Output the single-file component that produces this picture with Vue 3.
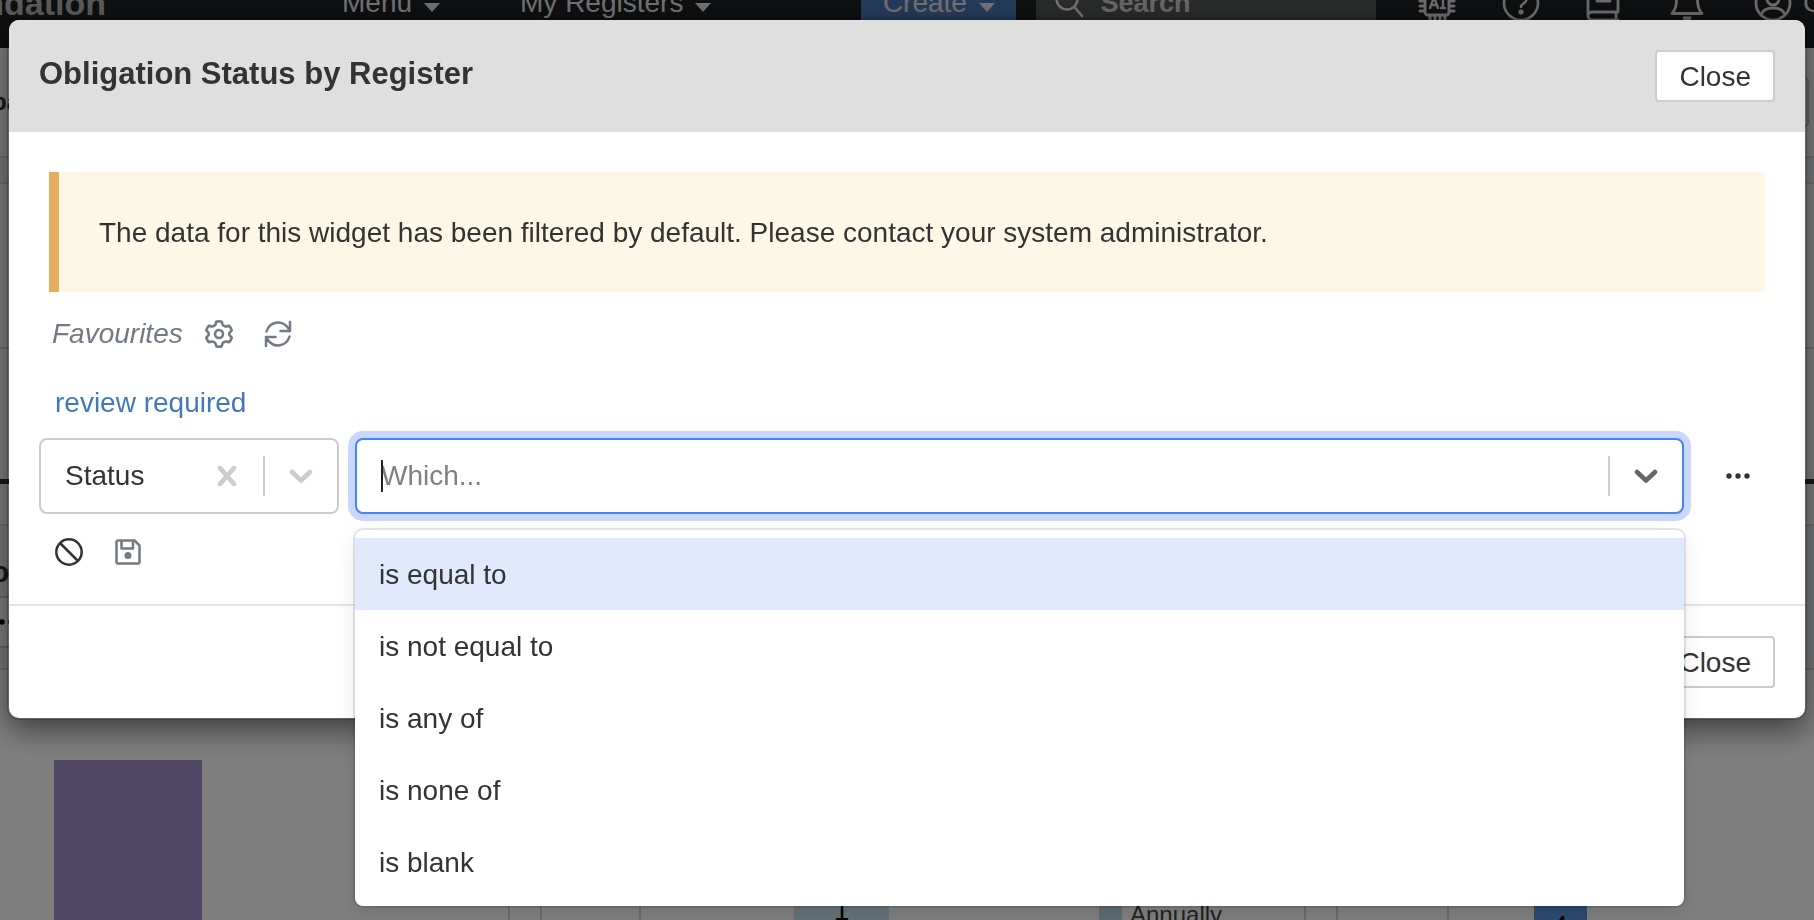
<script setup>
import { ref } from 'vue'

const field = ref('Status')
const query = ref('')
const active = ref(0)
const operators = ['is equal to', 'is not equal to', 'is any of', 'is none of', 'is blank']
</script>

<template>
  <div class="app">
    <div class="page">
      <header class="topbar">
        <div class="brand"><span>Foundation</span></div>
        <nav class="nav" aria-label="Main">
          <button class="nav-item" type="button">Menu <i class="tri"></i></button>
          <button class="nav-item" type="button">My Registers <i class="tri"></i></button>
        </nav>
        <button class="create" type="button">Create <i class="tri"></i></button>
        <div class="search">
          <svg width="32" height="32" viewBox="0 0 32 32" fill="none" stroke="currentColor" stroke-width="2.6" stroke-linecap="round"><circle cx="13" cy="12" r="10.5" /><path d="M20.5 20 28 29" /></svg>
          <input type="text" placeholder="Search" aria-label="Search" />
        </div>
        <div class="tools">
          <button type="button" aria-label="AI assistant">
            <svg width="38" height="38" viewBox="0 0 38 38" fill="none" stroke="currentColor" stroke-width="3" stroke-linecap="round"><rect x="7" y="7" width="24" height="24" rx="3" /><path d="M12 2v4M17 2v4M22 2v4M27 2v4M12 32v4M17 32v4M22 32v4M27 32v4M2 12h4M2 17h4M2 22h4M2 27h4M32 12h4M32 17h4M32 22h4M32 27h4" /><path d="m12 24 4-11 4 11M13.500 21h5M25 13v11M23 13h4M23 24h4" stroke-width="2.400" /></svg>
          </button>
          <button type="button" aria-label="Help">
            <svg width="38" height="38" viewBox="0 0 38 38" fill="none" stroke="currentColor" stroke-width="2.600" stroke-linecap="round"><circle cx="19" cy="19" r="17" /><path d="M13.500 14.500a5.500 5.500 0 1 1 8 5c-2 1.200-2.500 2-2.500 3.500" /><circle cx="19" cy="28" r="1.300" fill="currentColor" /></svg>
          </button>
          <button type="button" aria-label="Library">
            <svg width="38" height="38" viewBox="0 0 38 38" fill="none" stroke="currentColor" stroke-width="2.800" stroke-linecap="round" stroke-linejoin="round"><path d="M32 36H6a4 4 0 0 1-4-4V6a4 4 0 0 1 4-4h24a2 2 0 0 1 2 2v24H6a4 4 0 0 0-4 4M30 28v8M11 10h13M11 17h13" /></svg>
          </button>
          <button type="button" aria-label="Notifications">
            <svg width="38" height="38" viewBox="0 0 38 38" fill="none" stroke="currentColor" stroke-width="2.800" stroke-linecap="round" stroke-linejoin="round"><path d="M17 2v3M2 29.500c3-3 4.500-8 4.500-14a10.500 10.500 0 0 1 21 0c0 6 1.500 11 4.500 14Z" /><path d="M14 34h6l-3 3Z" fill="currentColor" /></svg>
          </button>
          <button type="button" aria-label="Account">
            <svg width="38" height="38" viewBox="0 0 38 38" fill="none" stroke="currentColor" stroke-width="2.800"><circle cx="19" cy="19" r="17" /><circle cx="19" cy="15" r="6" /><path d="M7.500 30c3-8 20-8 23 0" /></svg>
          </button>
          <span class="user">Chris</span>
        </div>
      </header>

      <main class="board">
        <div class="row title-row"><b>ba</b><i class="corner"></i></div>
        <div class="row tint-row"></div>
        <div class="row upper-row"></div>
        <div class="row lower-row"></div>
        <div class="row gap-row"></div>
        <div class="panel-row">
          <div class="panel-left">
            <div class="panel-head"><b>o</b></div>
            <div class="panel-menu">
              <svg width="16" height="6" viewBox="0 0 16 6"><circle cx="2" cy="3" r="2.700" /><circle cx="11" cy="3" r="2.700" /></svg>
            </div>
            <div class="panel-sub"></div>
          </div>
          <div class="panel-right"></div>
        </div>
        <div class="charts">
          <section class="card one"><div class="bar purple"></div></section>
          <section class="card two">
            <div class="axis"></div>
            <div class="bar pale">1</div>
            <div class="legend"><i></i><span>Annually</span></div>
          </section>
          <section class="card three"><div class="axis"></div><div class="bar blue">4</div></section>
        </div>
      </main>
    </div>

    <div class="backdrop">
      <div class="modal" role="dialog" aria-modal="true" aria-labelledby="dialog-title">
        <header class="modal-head">
          <h1 id="dialog-title">Obligation Status by Register</h1>
          <button class="btn" type="button">Close</button>
        </header>
        <div class="modal-body">
          <p class="alert">The data for this widget has been filtered by default. Please contact your system administrator.</p>
          <div class="favourites">
            <em>Favourites</em>
            <button type="button" aria-label="Favourite settings">
              <svg width="28" height="28" viewBox="0 0 28 28" fill="none" stroke="currentColor" stroke-width="2.600" stroke-linejoin="round"><circle cx="14" cy="14" r="4" /><path d="M11.300 1.800Q14 .8 16.700 1.800L17.600 4.700Q18 5.400 18.800 5.700L20 6.300Q20.700 6.600 21.500 6.400L24.200 5.900Q26 7.700 26.700 10.400L24.700 12.600Q24.200 13.200 24.200 14T24.700 15.400L26.700 17.600Q26 20.300 24.200 22.100L21.500 21.600Q20.700 21.400 20 21.700L18.800 22.300Q18 22.600 17.600 23.300L16.700 26.200Q14 27.200 11.300 26.200L10.400 23.300Q10 22.600 9.200 22.300L8 21.700Q7.300 21.400 6.500 21.600L3.800 22.100Q2 20.300 1.300 17.600L3.300 15.400Q3.800 14.800 3.800 14T3.300 12.600L1.300 10.400Q2 7.700 3.800 5.900L6.500 6.400Q7.300 6.600 8 6.300L9.200 5.700Q10 5.400 10.400 4.700Z" /></svg>
            </button>
            <button type="button" aria-label="Refresh favourites">
              <svg width="28" height="28" viewBox="0 0 28 28" fill="none" stroke="currentColor" stroke-width="2.500" stroke-linecap="round" stroke-linejoin="round"><path d="M2.500 11.500C5.500 1.500 18-1 24.500 8.500L26 11M26 2v9h-9.500M25.500 16.500C22.500 26.500 10 29 3.500 19.500L2 17M2 26v-9h9.500" /></svg>
            </button>
          </div>
          <a class="saved" href="#review-required">review required</a>
          <div class="filter">
            <div class="select">
              <select v-model="field" aria-label="Field"><option>Status</option></select>
              <button type="button" aria-label="Clear field">
                <svg width="20" height="20" viewBox="0 0 20 20" stroke="currentColor" stroke-width="4.600" stroke-linecap="round"><path d="m3 2 14 16M17 2 3 18" /></svg>
              </button>
              <i class="divider"></i>
              <span class="chevron"><svg width="24" height="16" viewBox="0 0 24 16" fill="none" stroke="currentColor" stroke-width="4.600" stroke-linecap="round" stroke-linejoin="round"><path d="m3 4 9 8.500 9-8.500" /></svg></span>
            </div>
            <div class="select focused">
              <span class="entry">
                <i class="caret"></i>
                <input v-model="query" type="text" placeholder="Which..." role="combobox" aria-label="Which condition" aria-expanded="true" aria-controls="operators" />
              </span>
              <i class="divider"></i>
              <button class="chevron" type="button" aria-label="Toggle options"><svg width="24" height="16" viewBox="0 0 24 16" fill="none" stroke="currentColor" stroke-width="4.600" stroke-linecap="round" stroke-linejoin="round"><path d="m3 4 9 8.500 9-8.500" /></svg></button>
              <ul id="operators" class="menu" role="listbox" aria-label="Conditions">
                <li v-for="(op, i) in operators" :key="op" role="option" :aria-selected="i === active" :class="{ on: i === active }" @mouseenter="active = i">{{ op }}</li>
              </ul>
            </div>
            <button class="more" type="button" aria-label="More">
              <svg width="24" height="6" viewBox="0 0 24 6" fill="currentColor"><circle cx="3" cy="3" r="2.700" /><circle cx="12" cy="3" r="2.700" /><circle cx="21" cy="3" r="2.700" /></svg>
            </button>
          </div>
          <div class="actions">
            <button type="button" aria-label="Clear filters">
              <svg width="28" height="28" viewBox="0 0 28 28" fill="none" stroke="currentColor" stroke-width="2.500"><circle cx="14" cy="14" r="12.700" /><path d="m5 5 18 18" /></svg>
            </button>
            <button class="save" type="button" aria-label="Save filter">
              <svg width="26" height="26" viewBox="0 0 26 26" fill="none" stroke="currentColor" stroke-width="2.500" stroke-linejoin="round"><path d="M3 1.500h16.500l5 5V23a1.500 1.500 0 0 1-1.500 1.500H3A1.500 1.500 0 0 1 1.500 23V3A1.500 1.500 0 0 1 3 1.500Z" /><path d="M6.500 1.500V9.500h11.500V1.500" /><circle cx="13" cy="16.500" r="3.500" fill="currentColor" stroke="none" /></svg>
            </button>
          </div>
        </div>
        <footer class="modal-foot"><button class="btn" type="button">Close</button></footer>
      </div>
    </div>
  </div>
</template>

<style>
html, body { margin: 0; overflow: hidden; }
</style>

<style scoped>
.app, .app * { box-sizing: border-box; }
.app {
  position: relative;
  height: 100vh;
  overflow: hidden;
  background: #fff;
  color: #333;
  font-family: "Liberation Sans", Arial, sans-serif;
  font-size: 28px;
  line-height: 40px;
}
button, input, select { font: inherit; color: inherit; border: 0; background: none; padding: 0; margin: 0; outline: 0; }
button { display: inline-flex; align-items: center; justify-content: center; }
svg { display: block; flex: none; }
i { font-style: normal; }

.page { display: flex; flex-direction: column; height: 100%; }
.topbar {
  display: flex;
  align-items: center;
  flex: none;
  height: 96px;
  margin-top: -48px;
  padding-top: 6px;
  background: #1b1f22;
  color: #e4e4e4;
  white-space: nowrap;
}
.brand { display: flex; flex: none; justify-content: flex-end; width: 106px; overflow: hidden; color: #b8b8b8; font-size: 34px; font-weight: 700; }
.nav { display: flex; flex: none; gap: 80px; margin-left: 236px; }
.nav-item, .create { flex: none; gap: 12px; }
.tri { border: 8px solid transparent; border-top: 9px solid currentColor; border-bottom: 0; margin-top: 8px; }
.create { width: 155px; height: 60px; margin-left: 150px; background: #4878b4; }
.search { display: flex; align-items: center; gap: 14px; flex: 1; min-width: 0; height: 60px; margin-left: 20px; padding-left: 18px; background: #535555; }
.search input { flex: 1; min-width: 0; font-weight: 700; font-size: 27px; }
.search input::placeholder { color: #d0d0d0; opacity: 1; }
.tools { display: flex; align-items: center; gap: 46px; flex: none; width: 438px; padding-left: 42px; overflow: hidden; color: #d8d8d8; }
.user { margin-left: -35px; }

.board { flex: 1; display: flex; flex-direction: column; min-height: 0; }
.row { flex: none; border-bottom: 2px solid #dcdcdc; }
.title-row { display: flex; align-items: center; justify-content: space-between; height: 110px; overflow: hidden; }
.title-row b { margin-left: -8px; font-size: 24px; }
.corner { width: 32px; height: 52px; margin-right: 5px; border: 2px solid #ccc; border-radius: 6px; }
.tint-row { height: 26px; background: #eff2f5; }
.upper-row { height: 165px; }
.lower-row { height: 135px; border-bottom: 5px solid #35383b; }
.gap-row { height: 42px; }
.panel-row { display: flex; justify-content: space-between; flex: none; height: 144px; border-bottom: 2px solid #dcdcdc; }
.panel-left { width: 50%; }
.panel-right { width: 50%; background: #eff2f5; }
.panel-head { height: 72px; padding-top: 26px; border-bottom: 2px solid #ccc; background: #eff2f5; overflow: hidden; }
.panel-head b { margin-left: -9px; font-size: 30px; }
.panel-menu { display: flex; align-items: center; height: 50px; border-bottom: 2px solid #ccc; }
.panel-sub { height: 20px; background: #eff2f5; }
.charts { flex: 1; display: grid; grid-template-columns: 510fr 766fr 478fr; gap: 30px; min-height: 0; overflow: hidden; color: #000; font-size: 24px; }
.card { display: flex; align-items: flex-end; min-width: 0; min-height: 0; border: solid #d6d6d6; border-width: 0 2px; }
.card.one { border-left: 0; padding-left: 54px; }
.card.two { padding-left: 97px; }
.card.three { border-right: 0; padding-left: 109px; }
.axis { height: 100%; border-left: 2px solid #d6d6d6; }
.bar { flex: none; text-align: center; }
.purple { width: 148px; height: 160px; background: #9e8ecb; }
.pale { width: 95px; height: 40px; margin-left: 153px; background: #cbe6f0; line-height: 62px; font-size: 28px; }
.legend { display: flex; gap: 8px; height: 30px; margin-left: 210px; overflow: visible; color: #444; }
.legend i { width: 23px; background: #b9dbe6; }
.legend span { line-height: 50px; }
.blue { width: 53px; height: 26px; margin-left: 85px; background: #5a94de; line-height: 62px; }

.backdrop { position: fixed; inset: 0; padding: 18px 7px 0; background: rgba(0, 0, 0, .5); }
.modal { position: relative; border: 2px solid rgba(0, 0, 0, .2); border-radius: 12px; background: #fff; background-clip: padding-box; box-shadow: 0 10px 30px rgba(0, 0, 0, .5); }
.modal-head { display: flex; justify-content: space-between; align-items: flex-start; height: 112px; padding: 30px; border-radius: 10px 10px 0 0; background: #dfdfdf; }
h1 { margin: 4px 0 0; font-size: 31px; font-weight: 700; line-height: 40px; }
.btn { height: 52px; padding: 2px 22px 0; border: 2px solid #ccc; border-radius: 4px; background: #fff; }
.modal-body { padding: 40px 30px 26px; }
.alert { margin: 0 10px; padding: 41px 40px 39px; border-left: 10px solid #e6ae5e; background: #fdf7e5; }
.favourites { display: flex; align-items: center; gap: 31px; margin: 22px 0 0 13px; color: #727a84; }
.favourites em { margin-right: -9px; }
.saved { display: block; width: max-content; margin: 29px 0 15px 16px; color: #4279b8; text-decoration: none; }
.filter { display: flex; align-items: center; }
.select { position: relative; display: flex; align-items: center; flex: none; width: 300px; height: 76px; padding-left: 24px; border: 2px solid #ccc; border-radius: 8px; color: #ccc; background: #fff; }
.select select { flex: 1; min-width: 0; appearance: none; color: #333; }
.divider { width: 2px; height: 40px; margin-left: 26px; background: #ccc; }
.chevron { display: flex; justify-content: center; width: 72px; }
.focused { flex: 1; width: auto; margin-left: 16px; border-color: #4285fa; box-shadow: 0 0 0 7px #cad8fd; color: #666; }
.entry { position: relative; flex: 1; display: flex; }
.entry input { width: 100%; color: #333; }
.entry input::placeholder { color: #808080; opacity: 1; }
.caret { position: absolute; left: 0; top: 4px; width: 2px; height: 32px; background: #222; }
.menu { position: absolute; z-index: 2; top: 90px; left: -2px; right: -2px; margin: 0; padding: 8px 0; list-style: none; border-radius: 8px; background: #fff; box-shadow: 0 0 0 2px rgba(0, 0, 0, .1), 0 8px 22px rgba(0, 0, 0, .1); color: #333; }
.menu li { padding: 17px 24px 15px; }
.menu .on { background: #e1e9fd; }
.more { flex: none; width: 75px; height: 52px; margin-left: 16px; }
.actions { display: flex; align-items: center; gap: 32px; height: 52px; margin-top: 12px; padding-left: 16px; }
.save { color: #727a84; }
.modal-foot { display: flex; justify-content: flex-end; padding: 30px; border-top: 2px solid #e5e5e5; }
</style>
